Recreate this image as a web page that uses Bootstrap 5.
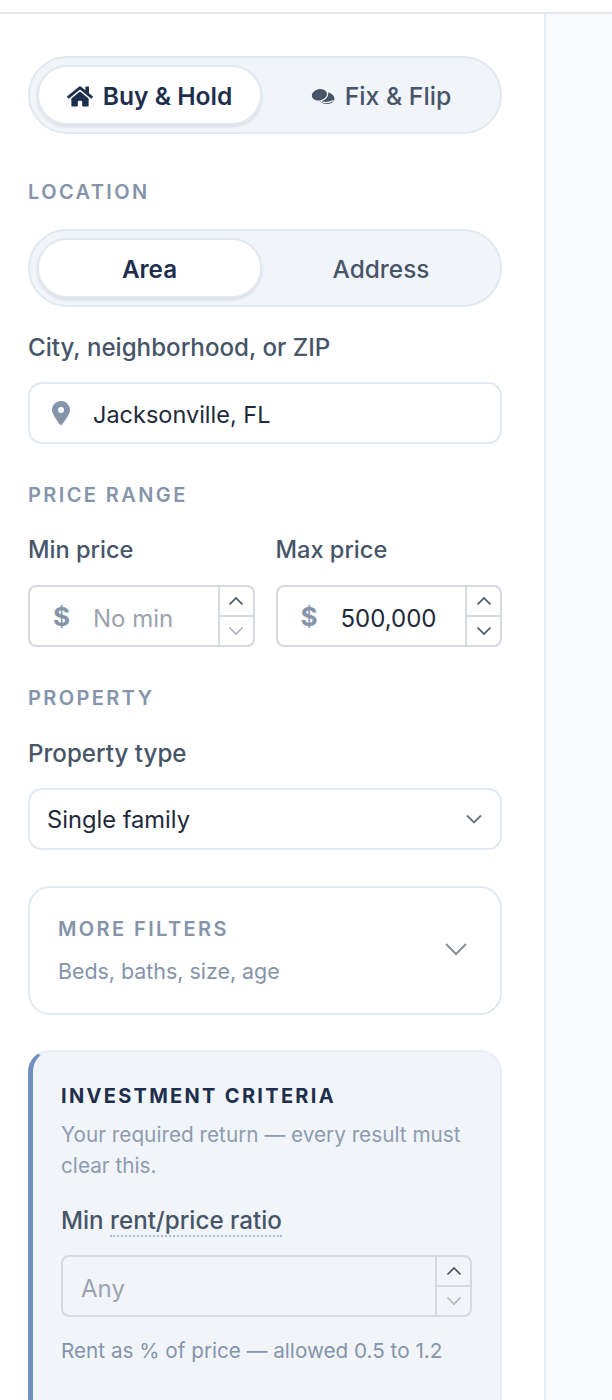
<!DOCTYPE html>
<html lang="en">
<head>
<meta charset="utf-8">
<title>Search filters</title>
<link rel="stylesheet" href="https://cdn.jsdelivr.net/npm/bootstrap@5.3.0/dist/css/bootstrap.min.css">
<style>
html,body{height:1400px;overflow:hidden}
body{font-family:Inter,"Liberation Sans",sans-serif;background:#fff;color:#1e293b}
.topstrip{height:14px;border-bottom:2px solid #e5e8ee;background:#fff}
.shell{height:1386px}
.sidebar{width:546px;flex:none;padding:42px 42px 0 28px;border-right:2px solid #e6edf6;background:#fff}
.mainarea{background:#f9fbfd}
.seg{height:78px;padding:7px;background:#f1f5f9;border:2px solid #e2e8f0;border-radius:39px}
.seg-btn{border:0;background:transparent;font-size:24.4px;font-weight:500;color:#475569;border-radius:30px;padding:3px 0 0;height:60px;line-height:1;flex:1 1 0;min-width:0;margin-right:-7px}
.seg-btn.on{flex:0 0 225px;margin-right:0;padding-top:5px;font-size:24.2px;font-weight:600;background:#fff;color:#1e2f4d;border:2px solid #e2e8f0;box-shadow:0 2px 3px rgba(15,23,42,.10)}
.seg-top .seg-btn{font-size:24.8px;padding-top:3px}
.seg-top .seg-btn.on{font-size:24.6px}
.seg-ico{fill:currentColor;flex:none}
.coin-cut{stroke:#f1f5f9;stroke-width:1.2}
.coin-line{fill:none;stroke:#f1f5f9;stroke-width:1}
.ico-gap{gap:10px}
.eyebrow{font-size:20px;line-height:24px;font-weight:600;letter-spacing:2.4px;color:#8494aa;text-transform:uppercase;margin:0}
.eye-loc{margin:46px 0 25px}
.eye-price{margin:39px 0 0}
.eye-prop{margin:39px 0 0}
.fieldlabel{display:block;font-size:24.15px;line-height:30px;font-weight:500;color:#475569;margin:0}
.lab-city{margin:26px 0 19px}
.lab-price{margin:29px 0 19px}
.lab-narrow{font-size:23.6px;margin:28px 0 20px}
.soft-box{height:62px;border:2px solid #e2e8f0;border-radius:14px;background:#fff}
.soft-box input{border:0;outline:0;background:transparent;font-size:23.5px;color:#1e293b;width:100%;padding:4px 0 0;box-shadow:none}
.pin{width:18px;height:24px;fill:#8494aa;margin:0 23px 0 22px;flex:none}
.numbox{height:62px;border:2px solid #d5d9e0;border-radius:8px;overflow:hidden;background:transparent}
.numbox input{flex:1 1 0;min-width:0;border:0;outline:0;background:transparent;font-size:24px;color:#1e293b;padding:5px 0 0}
.numbox input::placeholder,.soft-box input::placeholder{color:#9ca3af;opacity:1}
.dollar{flex:none;width:63px;padding:2px 0 0 23px;font-size:26px;font-weight:700;color:#8494aa;line-height:1}
.stepper{flex:0 0 35px;border-left:2px solid #d5d9e0}
.stepper span{flex:1 1 0;display:flex;align-items:center;justify-content:center}
.stepper span+span{border-top:2px solid #d5d9e0}
.stepper svg{width:16px;height:10px;fill:none;stroke:#4b5563;stroke-width:1.7}
.stepper.dim svg.low{stroke:#aeb4bd}
.price-gap{gap:21px}
.price-col{flex:1 1 0;min-width:0}
.sel{height:62px;border:2px solid #e2e8f0;border-radius:14px;font-size:23.7px;color:#1e293b;padding:2px 50px 0 17px;background-image:url("data:image/svg+xml,%3csvg xmlns='http://www.w3.org/2000/svg' viewBox='0 0 16 10'%3e%3cpath fill='none' stroke='%236b7280' stroke-width='1.8' d='M1 1.500l7 7 7-7'/%3e%3c/svg%3e");background-position:right 18px center;background-size:16px 10px;box-shadow:none}
.morebox{margin-top:36px;height:129px;border:2px solid #e2e8f0;border-radius:22px;padding:0 32px 0 28px;background:#fff}
.more-title{font-size:20px;line-height:24px;font-weight:600;letter-spacing:2.4px;color:#8494aa;margin:0 0 17px}
.more-sub{font-size:21.4px;line-height:26px;color:#8494aa;margin:0}
.more-chev{width:24px;height:14px;fill:none;stroke:#8a8f99;stroke-width:2.2;margin-bottom:4px}
.critbox{margin-top:35px;height:420px;background:#f1f5f9;border:2px solid #e8edf5;border-left:5px solid #7090c0;border-radius:22px;padding:32px 28px 0 28px}
.crit-title{font-size:20px;line-height:24px;font-weight:700;letter-spacing:2.3px;color:#1e2f4d;margin:0 0 11px}
.crit-text{font-size:20.75px;line-height:31px;color:#8d9bb0;margin:0 0 25px}
.crit-label{margin:0 0 19px}
.crit-label abbr{text-decoration:none;border-bottom:2px dotted #a9b8d6;cursor:help}
.crit-input input{padding-left:18px}
.crit-help{font-size:20.7px;line-height:26px;color:#8494aa;margin:21px 0 0}
</style>
</head>
<body>
<div class="topstrip"></div>
<div class="shell d-flex">
  <aside class="sidebar">
    <div class="seg seg-top d-flex">
      <button type="button" class="seg-btn on d-flex align-items-center justify-content-center ico-gap">
        <svg class="seg-ico" width="26" height="23" viewBox="0 0 576 512"><path d="M280.37 148.26L96 300.11V464a16 16 0 0 0 16 16l112.06-.29a16 16 0 0 0 15.92-16V368a16 16 0 0 1 16-16h64a16 16 0 0 1 16 16v95.64a16 16 0 0 0 16 16.05L464 480a16 16 0 0 0 16-16V300L295.67 148.26a12.19 12.19 0 0 0-15.3 0zM571.6 251.47L488 182.56V44.05a12 12 0 0 0-12-12h-56a12 12 0 0 0-12 12v72.61L318.47 43a48 48 0 0 0-61 0L4.34 251.47a12 12 0 0 0-1.6 16.9l25.5 31A12 12 0 0 0 45.15 301l235.22-193.74a12.19 12.19 0 0 1 15.3 0L530.9 301a12 12 0 0 0 16.9-1.6l25.5-31a12 12 0 0 0-1.7-16.93z"/></svg>
        <span>Buy &amp; Hold</span>
      </button>
      <button type="button" class="seg-btn d-flex align-items-center justify-content-center ico-gap">
        <svg class="seg-ico" width="24" height="17" viewBox="0 0 22 16"><ellipse cx="14" cy="9.500" rx="7.800" ry="5.500" transform="rotate(8 14 9.500)"/><path class="coin-line" d="M9 12.800c3.300 1.400 8 1 11.500-1"/><ellipse class="coin-cut" cx="7.600" cy="6.400" rx="7.800" ry="5.900" transform="rotate(-14 7.600 6.400)"/></svg>
        <span>Fix &amp; Flip</span>
      </button>
    </div>

    <h2 class="eyebrow eye-loc">Location</h2>
    <div class="seg d-flex">
      <button type="button" class="seg-btn on">Area</button>
      <button type="button" class="seg-btn">Address</button>
    </div>

    <label class="fieldlabel lab-city" for="city">City, neighborhood, or ZIP</label>
    <div class="soft-box d-flex align-items-center">
      <svg class="pin" viewBox="0 0 384 512"><path d="M215.7 499.2C267 435 384 279.4 384 192C384 86 298 0 192 0S0 86 0 192c0 87.4 117 243 168.3 307.2c12.3 15.3 35.1 15.3 47.4 0zM192 128a64 64 0 1 1 0 128 64 64 0 1 1 0-128z"/></svg>
      <input id="city" type="text" value="Jacksonville, FL">
    </div>

    <h2 class="eyebrow eye-price">Price range</h2>
    <div class="d-flex price-gap">
      <div class="price-col">
        <label class="fieldlabel lab-narrow" for="minp">Min price</label>
        <div class="numbox d-flex align-items-stretch">
          <span class="dollar d-flex align-items-center">$</span>
          <input id="minp" type="text" placeholder="No min">
          <div class="stepper dim d-flex flex-column">
            <span><svg viewBox="0 0 16 10"><path d="M1.5 8.5L8 2l6.500 6.500"/></svg></span>
            <span><svg class="low" viewBox="0 0 16 10"><path d="M1.5 1.5L8 8l6.500-6.500"/></svg></span>
          </div>
        </div>
      </div>
      <div class="price-col">
        <label class="fieldlabel lab-narrow" for="maxp">Max price</label>
        <div class="numbox d-flex align-items-stretch">
          <span class="dollar d-flex align-items-center">$</span>
          <input id="maxp" type="text" value="500,000">
          <div class="stepper d-flex flex-column">
            <span><svg viewBox="0 0 16 10"><path d="M1.5 8.5L8 2l6.500 6.500"/></svg></span>
            <span><svg viewBox="0 0 16 10"><path d="M1.5 1.5L8 8l6.500-6.500"/></svg></span>
          </div>
        </div>
      </div>
    </div>

    <h2 class="eyebrow eye-prop">Property</h2>
    <label class="fieldlabel lab-price" for="ptype">Property type</label>
    <select id="ptype" class="form-select sel">
      <option>Single family</option>
    </select>

    <div class="morebox d-flex align-items-center justify-content-between">
      <div>
        <p class="more-title">MORE FILTERS</p>
        <p class="more-sub">Beds, baths, size, age</p>
      </div>
      <svg class="more-chev" viewBox="0 0 24 14"><path d="M2 2l10 10L22 2"/></svg>
    </div>

    <section class="critbox">
      <h3 class="crit-title">INVESTMENT CRITERIA</h3>
      <p class="crit-text">Your required return — every result must clear this.</p>
      <label class="fieldlabel crit-label" for="ratio">Min <abbr title="Monthly rent divided by price">rent/price ratio</abbr></label>
      <div class="numbox crit-input d-flex align-items-stretch">
        <input id="ratio" type="text" placeholder="Any">
        <div class="stepper dim d-flex flex-column">
          <span><svg viewBox="0 0 16 10"><path d="M1.5 8.5L8 2l6.500 6.500"/></svg></span>
          <span><svg class="low" viewBox="0 0 16 10"><path d="M1.5 1.5L8 8l6.500-6.500"/></svg></span>
        </div>
      </div>
      <p class="crit-help">Rent as % of price — allowed 0.5 to 1.2</p>
    </section>
  </aside>
  <main class="mainarea flex-grow-1"></main>
</div>
<script src="https://cdn.jsdelivr.net/npm/bootstrap@5.3.0/dist/js/bootstrap.bundle.min.js"></script>
</body>
</html>
